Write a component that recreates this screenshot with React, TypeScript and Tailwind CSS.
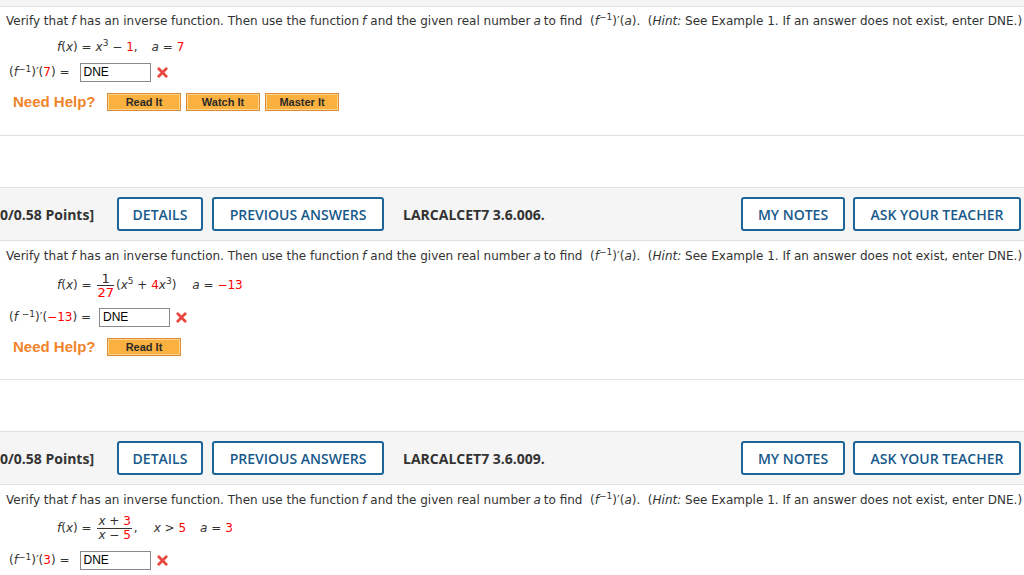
import React from "react";

function XMark() {
  return (
    <svg width="11" height="11" viewBox="0 0 11 11" className="ml-[6px]">
      <path d="M1.8 1.8L9.2 9.2M9.2 1.8L1.8 9.2" stroke="#e8483f" strokeWidth="2.8" strokeLinecap="round" />
    </svg>
  );
}

function Red({ children }: { children: React.ReactNode }) {
  return <span className="text-[#f00]">{children}</span>;
}

function Inv() {
  return (
    <>
      (<i>f</i>
      <sup className="text-[9px]">−1</sup>)′
    </>
  );
}

function Question() {
  return (
    <div className="flex h-[18px] items-center pl-[6px] whitespace-nowrap">
      Verify that <i className="mr-[4px] ml-[3px]">f</i> has an inverse function. Then use the function{" "}
      <i className="mr-[4px] ml-[3px]">f</i> and the given real number <i className="mx-[3px]">a</i> to find&nbsp;&nbsp;
      <Inv />(<i>a</i>).&nbsp;&nbsp;(<i>Hint:</i>&nbsp;See Example 1. If an answer does not exist, enter DNE.)
    </div>
  );
}

function AnswerRow({ label, inputLeft }: { label: React.ReactNode; inputLeft: string }) {
  return (
    <div className="flex h-[20px] items-center pl-[9px]">
      <span className="whitespace-nowrap">{label}</span>
      <div
        className={`${inputLeft} flex h-[19px] w-[71px] items-center border border-[#8a8a8a] pl-[3px] font-['Liberation_Sans',sans-serif] text-[12px] text-black`}
      >
        DNE
      </div>
      <XMark />
    </div>
  );
}

function HelpRow({ buttons }: { buttons: string[] }) {
  return (
    <div className="flex h-[20px] items-center pl-[13px] font-['Liberation_Sans',sans-serif]">
      <span className="w-[94px] text-[15px] font-bold text-[#f0842a]">Need Help?</span>
      <div className="flex gap-[5px]">
        {buttons.map((b) => (
          <div
            key={b}
            className="flex h-[18px] w-[74px] items-center justify-center border border-[#de8a32] bg-[#fbb13f] text-[11px] font-bold text-[#2a2a2a] shadow-[inset_0_0_0_1px_#fdd48c]"
          >
            {b}
          </div>
        ))}
      </div>
    </div>
  );
}

function Header({ code }: { code: string }) {
  const btn =
    "h-[34px] rounded-[3px] border-2 border-[#1c6599] bg-white font-semibold text-[#17598b]";
  return (
    <div className="flex h-[54px] items-center border-y border-[#e0e0e0] bg-[#f5f5f5] font-['Open_Sans',sans-serif] text-[14px]">
      <span className="w-[97px] font-bold whitespace-nowrap text-[#333]">0/0.58 Points]</span>
      <button className={`${btn} ml-[20px] w-[86px]`}>DETAILS</button>
      <button className={`${btn} ml-[9px] w-[172px]`}>PREVIOUS ANSWERS</button>
      <span className="ml-[19px] font-bold text-[#333]">{code}</span>
      <div className="ml-auto flex gap-[8px] pr-[3px]">
        <button className={`${btn} w-[104px]`}>MY NOTES</button>
        <button className={`${btn} w-[168px]`}>ASK YOUR TEACHER</button>
      </div>
    </div>
  );
}

export default function App() {
  return (
    <div className="h-[575px] w-[1024px] overflow-hidden bg-white font-['DejaVu_Sans',sans-serif] text-[12px] text-[#333]">
      <div className="h-[7px] border-b border-[#e0e0e0] bg-[#f5f5f5]" />

      {/* problem 1 */}
      <div className="border-b border-[#e0e0e0] pt-[5px] pb-[23px]">
        <Question />
        <div className="mt-[6px] flex h-[22px] items-center pl-[57px] whitespace-nowrap">
          <i>f</i>(<i>x</i>)&nbsp;= <i className="ml-[4px]">x</i>
          <sup className="text-[9px]">3</sup>&nbsp;−&nbsp;<Red>1</Red>,
          <i className="ml-[14px]">a</i>&nbsp;= <Red>&nbsp;7</Red>
        </div>
        <div className="mt-[4px]">
          <AnswerRow
            inputLeft="ml-[10px]"
            label={
              <>
                <Inv />(<Red>7</Red>) =
              </>
            }
          />
        </div>
        <div className="mt-[10px]">
          <HelpRow buttons={["Read It", "Watch It", "Master It"]} />
        </div>
      </div>

      <div className="h-[51px]" />
      <Header code="LARCALCET7 3.6.006." />

      {/* problem 2 */}
      <div className="border-b border-[#e0e0e0] pt-[6px] pb-[22px]">
        <Question />
        <div className="mt-[5px] flex h-[30px] items-center pl-[57px] whitespace-nowrap">
          <i>f</i>(<i>x</i>)&nbsp;=&nbsp;
          <span className="mx-[2px] inline-flex flex-col items-center text-[13px] leading-[13px]">
            <span className="px-[3px]">1</span>
            <span className="h-px w-full bg-[#333]" />
            <Red>27</Red>
          </span>
          (<i>x</i>
          <sup className="text-[9px]">5</sup>&nbsp;+&nbsp;<Red>4</Red>
          <i>x</i>
          <sup className="text-[9px]">3</sup>)
          <i className="ml-[16px]">a</i>&nbsp;= <Red>&nbsp;−13</Red>
        </div>
        <div className="mt-[7px]">
          <AnswerRow
            inputLeft="ml-[8px]"
            label={
              <>
                (<i>f</i>&nbsp;<sup className="text-[9px]">−1</sup>)′(<Red>−13</Red>) =
              </>
            }
          />
        </div>
        <div className="mt-[10px]">
          <HelpRow buttons={["Read It"]} />
        </div>
      </div>

      <div className="h-[51px]" />
      <Header code="LARCALCET7 3.6.009." />

      {/* problem 3 */}
      <div className="pt-[6px]">
        <Question />
        <div className="mt-[4px] flex h-[30px] items-center pl-[57px] whitespace-nowrap">
          <i>f</i>(<i>x</i>)&nbsp;=&nbsp;
          <span className="mx-[2px] inline-flex flex-col items-center leading-[13px]">
            <span className="px-[1px]">
              <i>x</i> + <Red>3</Red>
            </span>
            <span className="h-px w-full bg-[#333]" />
            <span>
              <i>x</i> − <Red>5</Red>
            </span>
          </span>
          ,<i className="ml-[16px]">x</i>&nbsp;&gt; <Red>&nbsp;5</Red>
          <i className="ml-[14px]">a</i>&nbsp;= <Red>&nbsp;3</Red>
        </div>
        <div className="mt-[7px]">
          <AnswerRow
            inputLeft="ml-[10px]"
            label={
              <>
                <Inv />(<Red>3</Red>) =
              </>
            }
          />
        </div>
      </div>
    </div>
  );
}
